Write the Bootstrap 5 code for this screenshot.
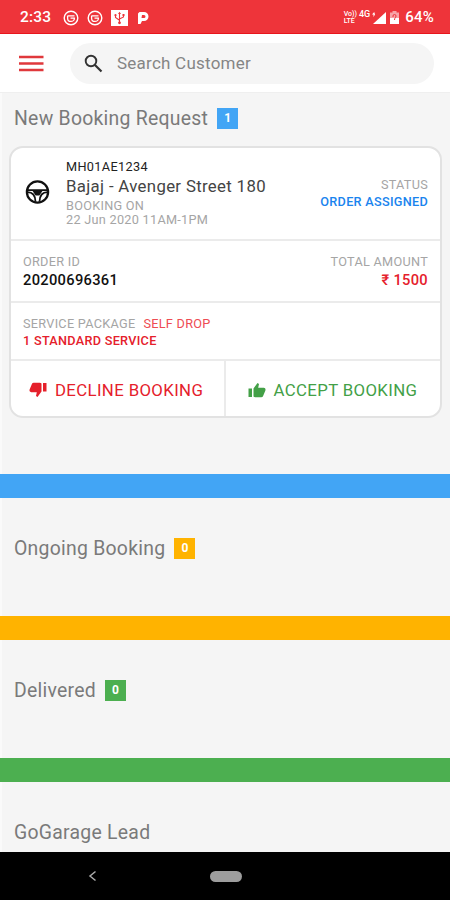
<!DOCTYPE html>
<html lang="en">
<head>
<meta charset="utf-8">
<meta name="viewport" content="width=device-width, initial-scale=1">
<title>Bookings</title>
<link href="https://cdn.jsdelivr.net/npm/bootstrap@5.3.0/dist/css/bootstrap.min.css" rel="stylesheet">
<style>
  body { font-family: Roboto, "Liberation Sans", sans-serif; background: #f5f5f5; height: 900px; overflow: hidden; color: #111; }
  .status-bar { height: 34px; background: #ee343a; border-bottom: 1px solid #e8151c; padding: 2px 16px 0 20px; }
  .clock { font-size: 15.5px; font-weight: 500; width: 43px; letter-spacing: .2px; }
  .volte { font-size: 7px; line-height: 6.5px; font-weight: 500; }
  .net { font-size: 9px; line-height: 9px; font-weight: 500; margin-bottom: 7px; margin-left: 2px; }
  .signal { margin-left: 2px; }
  .battery-text { font-size: 15px; font-weight: 500; letter-spacing: .25px; margin-left: 6px; }
  .top-bar { height: 59px; border-bottom: 1px solid #efefef; padding: 9px 16px 0 19px; }
  .search { width: 364px; height: 41px; background: #f5f5f5; padding-left: 14px; }
  .search span { font-size: 17px; letter-spacing: .24px; color: #858585; margin-left: 13px; padding-top: 1px; }
  .section-title { font-size: 19.4px; line-height: 24px; color: #7a7a7a; letter-spacing: .26px; padding-left: 12px; }
  .count { width: 21px; height: 21px; color: #fff; font-size: 12px; font-weight: 700; line-height: 21px; letter-spacing: 0; margin: 0 0 2px 9px; }
  .blue { background: #42a5f5; } .amber { background: #ffb300; } .green { background: #4caf50; }
  .band { height: 24px; }
  .main-area { border-left: 2px solid #fafafa; height: 381px; padding-top: 14px; }
  .block { height: 118px; border-left: 2px solid #fafafa; padding-top: 39px; }
  .block-last { height: 70px; }
  .booking { width: 433px; height: 272px; margin: 15px 0 0 7px; border: 2px solid #e2e2e2; border-radius: 14px; background: #fff; }
  .line { border-bottom: 2px solid #ebebeb; }
  .r1 { height: 93px; } .r2 { height: 62px; } .r3 { height: 58px; } .r4 { height: 57px; }
  .wheel { margin: 0 0 4px 14px; }
  .vehicle { margin: 10px 0 0 16px; }
  .cap { font-size: 12.7px; line-height: 17px; color: #a5a5a5; letter-spacing: .28px; }
  .plate { font-size: 12.7px; line-height: 17px; color: #222; letter-spacing: .35px; }
  .model { font-size: 16.8px; line-height: 23px; color: #444; letter-spacing: .33px; margin-bottom: 1px; }
  .tight { line-height: 14px; }
  .med { font-weight: 500; }
  .strong { font-size: 14.7px; line-height: 20px; font-weight: 500; letter-spacing: .3px; }
  .t-blue { color: #1a84ee; } .t-red { color: #e5202b; } .t-green { color: #43a047; }
  .soft { color: #ee4c53; }
  .act { font-size: 16.8px; letter-spacing: .36px; padding-top: 3px; }
  .act-left { padding-left: 18px; border-right: 2px solid #ebebeb; }
  .act-right { padding-left: 22px; }
  .act svg { margin: 0 8px 2px 0; }
  .nav-keys { height: 48px; background: #000; padding-left: 88px; }
  .home-pill { width: 32px; height: 11px; background: #9d9d9d; margin-left: 113px; }
</style>
</head>
<body>
<header>
  <div class="status-bar d-flex align-items-center text-white">
    <span class="clock">2:33</span>
    <div class="d-flex align-items-center">
      <svg width="16" height="16" viewBox="0 0 16 16" fill="none" stroke="#fff"><circle cx="8" cy="8" r="6.800" stroke-width="1.400"/><path d="M4.500 5.800h7M4.600 5.800v2.400c0 4.300 6.800 4.300 6.800 0H7.500" stroke-width="1.300"/></svg>
      <svg class="ms-2" width="16" height="16" viewBox="0 0 16 16" fill="none" stroke="#fff"><circle cx="8" cy="8" r="6.800" stroke-width="1.400"/><path d="M4.500 5.800h7M4.600 5.800v2.400c0 4.300 6.800 4.300 6.800 0H7.500" stroke-width="1.300"/></svg>
      <svg class="ms-2" width="17" height="16" viewBox="0 0 17 16"><rect width="17" height="16" fill="#fff"/><path d="M8.500 3v9.500M4.500 5.500v2l4 2.700M12.500 5v2l-4 2" fill="none" stroke="#ee343a" stroke-width="1.100"/><circle cx="8.500" cy="12.800" r="1.400" fill="#ee343a"/><circle cx="4.500" cy="5.200" r="1.100" fill="#ee343a"/><path d="M7 4l1.500-2.200L10 4zM11.500 4h2v2h-2z" fill="#ee343a"/></svg>
      <svg class="ms-2" width="14" height="14" viewBox="0 0 14 14"><path d="M3.500 1H8a4.500 4.500 0 0 1 0 9H6L4.500 13H2V2.500z" fill="#fff"/><path d="M6 4h2a1.500 1.500 0 0 1 0 3H5.500z" fill="#ee343a"/></svg>
    </div>
    <div class="d-flex align-items-center ms-auto">
      <div class="volte">Vo))<br>LTE</div>
      <div class="net">4G</div>
      <svg class="signal" width="14" height="14" viewBox="0 0 14 14" fill="#fff"><path d="M14 1v12H1z"/><path d="M1.500 6V3.500H0L2.200 1l.8 2.500z"/></svg>
      <svg class="ms-1" width="9" height="13" viewBox="0 0 9 13"><path d="M2.500 1.500V0h4v1.500H9V13H0V1.500z" fill="#fff" opacity=".55"/><path d="M0 7h9v6H0z" fill="#fff"/><path d="M3 6V5a1.500 1.500 0 0 1 3 0C6 7 4.500 6.500 4.500 9" fill="none" stroke="#ee343a" stroke-width="1"/></svg>
      <span class="battery-text">64%</span>
    </div>
  </div>
  <div class="top-bar bg-white d-flex">
    <svg class="flex-shrink-0 mt-2" width="25" height="26" viewBox="0 0 25 26" stroke="#e0383c" stroke-width="2.300"><path d="M0 6h24.500M0 12.500h24.500M0 19h24.500"/></svg>
    <div class="search rounded-pill d-flex align-items-center ms-auto">
      <svg width="20" height="20" viewBox="0 0 20 20" fill="none" stroke="#333"><circle cx="7" cy="7" r="5.300" stroke-width="1.900"/><path d="M11 11l6.500 6.500" stroke-width="2.200"/></svg>
      <span>Search Customer</span>
    </div>
  </div>
</header>
<main>
  <section class="main-area">
    <div class="section-title d-flex align-items-center">New Booking Request <span class="count blue text-center">1</span></div>
    <article class="booking overflow-hidden">
      <div class="r1 line d-flex">
        <svg class="wheel flex-shrink-0 align-self-center" width="25" height="24" viewBox="0 0 24 24" fill="none" stroke="#111"><circle cx="12" cy="12" r="10.600" stroke-width="2.300"/><path d="M1.800 10.200h20.400M2 12.200c5.500 0 7.800 3 8 9.500M22 12.200c-5.500 0-7.800 3-8 9.500" stroke-width="1.800"/><path d="M6.500 10h11L14 15.500h-4z" fill="#111" stroke="none"/></svg>
        <div class="vehicle text-nowrap">
          <div class="plate">MH01AE1234</div>
          <div class="model">Bajaj - Avenger Street 180</div>
          <div class="cap tight">BOOKING ON</div>
          <div class="cap tight">22 Jun 2020 11AM-1PM</div>
        </div>
        <div class="ms-auto text-end me-2 pe-1 pt-4 mt-1 text-nowrap">
          <div class="cap">STATUS</div>
          <div class="cap med t-blue">ORDER ASSIGNED</div>
        </div>
      </div>
      <div class="r2 line d-flex justify-content-between px-2 pt-2">
        <div class="ps-1 pt-1"><div class="cap">ORDER ID</div><div class="strong">20200696361</div></div>
        <div class="pe-1 pt-1 text-end"><div class="cap">TOTAL AMOUNT</div><div class="strong t-red">₹ 1500</div></div>
      </div>
      <div class="r3 line px-2 pt-2">
        <div class="ps-1 pt-1"><div class="cap">SERVICE PACKAGE<span class="ms-2 soft">SELF DROP</span></div><div class="cap med t-red">1 STANDARD SERVICE</div></div>
      </div>
      <div class="r4 row g-0">
        <div class="col-6 act act-left t-red d-flex align-items-center text-nowrap">
          <svg width="18" height="16" viewBox="0 0 18 16" fill="#e5202b"><path d="M14 1h3.500v8.500H14zM12.500 1.500v8L8.500 15 7 14l.8-3.800H2.200Q0 10 .6 7.600L3 1.800Q3.400.8 4.800.8h6q1 0 1.700.7z"/></svg>DECLINE BOOKING</div>
        <div class="col-6 act act-right t-green d-flex align-items-center text-nowrap">
          <svg width="18" height="16" viewBox="0 0 18 16" fill="#43a047"><path d="M.5 6.500H4V15H.5zM5.500 14.500v-8L9.500 1 11 2l-.8 3.800h5.600q2.200.2 1.600 2.600L15 14.200q-.4 1-1.800 1h-6q-1 0-1.700-.7z"/></svg>ACCEPT BOOKING</div>
      </div>
    </article>
  </section>
  <div class="band blue"></div>
  <section class="block"><div class="section-title d-flex align-items-center">Ongoing Booking <span class="count amber text-center">0</span></div></section>
  <div class="band amber"></div>
  <section class="block"><div class="section-title d-flex align-items-center">Delivered <span class="count green text-center">0</span></div></section>
  <div class="band green"></div>
  <section class="block block-last"><div class="section-title">GoGarage Lead</div></section>
</main>
<footer class="nav-keys d-flex align-items-center">
  <svg width="9" height="12" viewBox="0 0 9 12" fill="none" stroke="#aaa" stroke-width="1.500"><path d="M7.500 1.500L2 6l5.500 4.500"/></svg>
  <div class="home-pill rounded-pill"></div>
</footer>
<script src="https://cdn.jsdelivr.net/npm/bootstrap@5.3.0/dist/js/bootstrap.bundle.min.js"></script>
</body>
</html>
